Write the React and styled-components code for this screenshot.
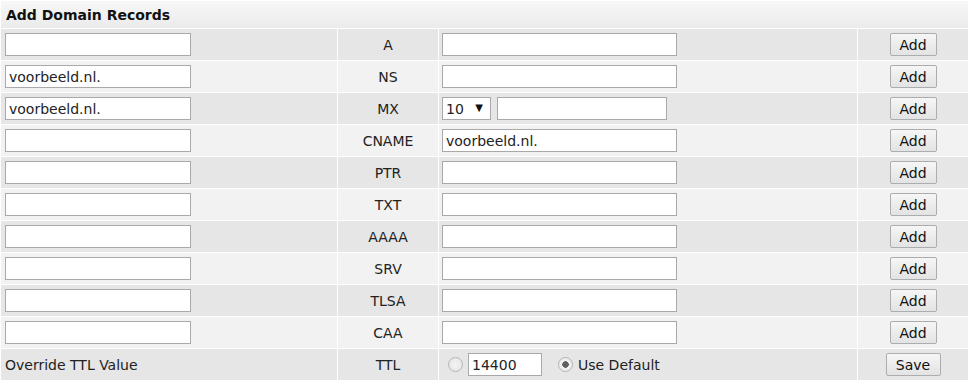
import React from 'react';
import styled, { createGlobalStyle } from 'styled-components';

const GlobalStyle = createGlobalStyle`
  body {
    margin: 0;
    background: #ffffff;
    font-family: "DejaVu Sans", Verdana, sans-serif;
    font-size: 14px;
    color: #222;
  }
`;

const Table = styled.table`
  width: 969px;
  border-collapse: separate;
  border-spacing: 1px;
  table-layout: fixed;
`;

const HeaderCell = styled.th`
  height: 27px;
  padding: 0 5px;
  text-align: left;
  font-weight: bold;
  font-size: 14px;
  color: #111;
  background: linear-gradient(#f7f7f7, #ebebeb);
`;

const Row = styled.tr`
  background: ${p => (p.$alt ? '#f2f2f2' : '#e6e6e6')};
`;

const Cell = styled.td`
  height: 31px;
  padding: 0 ${p => p.$pad || 4}px;
  text-align: ${p => p.$align || 'left'};
  vertical-align: middle;
  white-space: nowrap;
`;

const TextInput = styled.input`
  box-sizing: border-box;
  width: ${p => p.$w}px;
  height: 23px;
  margin: 0;
  padding: 0 3px;
  border: 1px solid #a9a9a9;
  background: #fff;
  font-family: "DejaVu Sans", Verdana, sans-serif;
  font-size: 14px;
  color: #222;
  vertical-align: middle;
  outline: none;
`;

const SelectWrap = styled.span`
  position: relative;
  display: inline-block;
  vertical-align: middle;
  margin-right: 6px;
`;

const Select = styled.select`
  box-sizing: border-box;
  width: 49px;
  height: 23px;
  padding: 0 3px;
  border: 1px solid #a9a9a9;
  border-radius: 0;
  background: #fff;
  appearance: none;
  font-family: "DejaVu Sans", Verdana, sans-serif;
  font-size: 14px;
  color: #222;
  vertical-align: middle;
`;

const Caret = styled.span`
  position: absolute;
  right: 8px;
  top: 5px;
  font-size: 10px;
  color: #111;
  pointer-events: none;
`;

const Button = styled.button`
  box-sizing: border-box;
  min-width: ${p => p.$w}px;
  height: 23px;
  padding: 0 6px;
  border: 1px solid #adadad;
  border-radius: 2px;
  background: linear-gradient(#f6f6f6, #e3e3e3);
  font-family: "DejaVu Sans", Verdana, sans-serif;
  font-size: 14px;
  color: #111;
  vertical-align: middle;
`;

const Radio = styled.input.attrs({ type: 'radio' })`
  appearance: none;
  box-sizing: border-box;
  width: 15px;
  height: 15px;
  margin: 0 5px 0 ${p => p.$ml || 0}px;
  border: 1px solid #b5b5b5;
  border-radius: 50%;
  background: radial-gradient(circle, #f4f4f4 0%, #e2e2e2 100%);
  vertical-align: middle;

  &:checked {
    background: radial-gradient(circle, #5f5f5f 0 3px, #f2f2f2 3.5px, #e2e2e2 100%);
  }
`;

const RadioLabel = styled.span`
  vertical-align: middle;
`;

const records = [
  { type: 'A', name: '' },
  { type: 'NS', name: 'voorbeeld.nl.' },
  { type: 'MX', name: 'voorbeeld.nl.', mx: true },
  { type: 'CNAME', name: '', value: 'voorbeeld.nl.' },
  { type: 'PTR', name: '' },
  { type: 'TXT', name: '' },
  { type: 'AAAA', name: '' },
  { type: 'SRV', name: '' },
  { type: 'TLSA', name: '' },
  { type: 'CAA', name: '' },
];

const App = () => (
  <>
    <GlobalStyle />
    <Table>
      <colgroup>
        <col style={{ width: 336 }} />
        <col style={{ width: 100 }} />
        <col style={{ width: 418 }} />
        <col style={{ width: 110 }} />
      </colgroup>
      <thead>
        <tr>
          <HeaderCell colSpan={4}>Add Domain Records</HeaderCell>
        </tr>
      </thead>
      <tbody>
        {records.map((r, i) => (
          <Row key={r.type} $alt={i % 2 === 1}>
            <Cell>
              <TextInput $w={186} defaultValue={r.name} />
            </Cell>
            <Cell $align="center">{r.type}</Cell>
            <Cell $pad={3}>
              {r.mx ? (
                <>
                  <SelectWrap>
                    <Select defaultValue="10">
                      <option value="10">10</option>
                      <option value="20">20</option>
                    </Select>
                    <Caret>▼</Caret>
                  </SelectWrap>
                  <TextInput $w={170} />
                </>
              ) : (
                <TextInput $w={235} defaultValue={r.value || ''} />
              )}
            </Cell>
            <Cell $align="center">
              <Button $w={47}>Add</Button>
            </Cell>
          </Row>
        ))}
        <Row>
          <Cell>Override TTL Value</Cell>
          <Cell $align="center">TTL</Cell>
          <Cell $pad={3}>
            <Radio name="ttl" $ml={6} />
            <TextInput $w={74} defaultValue="14400" />
            <Radio name="ttl" $ml={16} defaultChecked />
            <RadioLabel>Use Default</RadioLabel>
          </Cell>
          <Cell $align="center">
            <Button $w={55}>Save</Button>
          </Cell>
        </Row>
      </tbody>
    </Table>
  </>
);

export default App;
